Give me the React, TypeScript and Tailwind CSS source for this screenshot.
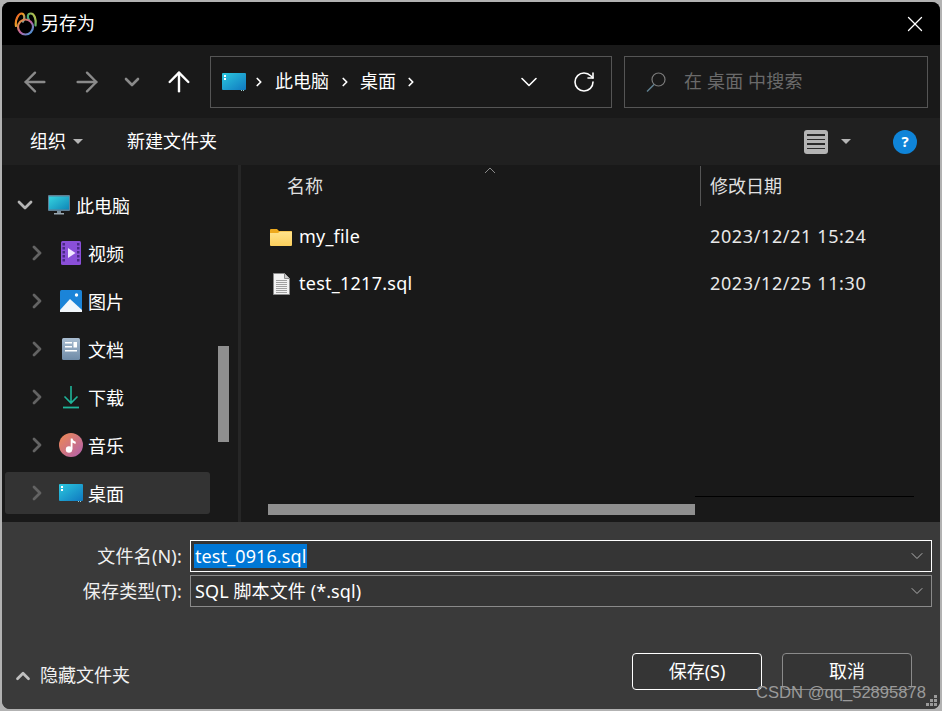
import React from 'react';
import { ArrowLeft, ArrowRight, ArrowUp, ChevronDown, ChevronRight, ChevronUp, RotateCw, X } from 'lucide-react';

const FONT = { fontFamily: '"Noto Sans", "Noto Sans CJK SC", sans-serif' };

const Logo = () => (
    <svg width="24" height="24" viewBox="0 0 24 24" fill="none">
        <defs>
            <linearGradient id="logoA" x1="0" y1="0" x2="1" y2="1">
                <stop offset="0" stopColor="#e8402c" />
                <stop offset="0.45" stopColor="#f0a020" />
                <stop offset="1" stopColor="#2f9fe0" />
            </linearGradient>
            <linearGradient id="logoB" x1="1" y1="0" x2="0" y2="1">
                <stop offset="0" stopColor="#d8c040" />
                <stop offset="0.6" stopColor="#4fb070" />
                <stop offset="1" stopColor="#2f8fe0" />
            </linearGradient>
            <linearGradient id="logoC" x1="0" y1="0" x2="1" y2="1">
                <stop offset="0" stopColor="#f0a020" />
                <stop offset="0.5" stopColor="#c060a0" />
                <stop offset="1" stopColor="#2f9fe0" />
            </linearGradient>
        </defs>
        <path d="M2 14C.8 8 4.5 1.5 7.5 1.5c3.2 0 3.6 5 1.4 8.2" stroke="url(#logoA)" strokeWidth="2.2" strokeLinecap="round" />
        <path d="M15 8C13 5 13.5 1.5 16.8 1.5c3.5 0 5.7 6 4.7 12" stroke="url(#logoB)" strokeWidth="2.2" strokeLinecap="round" />
        <circle cx="11.5" cy="15" r="7.5" stroke="url(#logoC)" strokeWidth="2.2" />
    </svg>
);

const DesktopIcon = ({ id }: { id: string }) => (
    <svg width="24" height="18" viewBox="0 0 24 18">
        <defs>
            <linearGradient id={id} x1="0" y1="0" x2="1" y2="1">
                <stop offset="0" stopColor="#2cc8de" />
                <stop offset="1" stopColor="#0f78c0" />
            </linearGradient>
        </defs>
        <rect x="0" y="0" width="24" height="17" rx="1" fill={`url(#${id})`} />
        <rect x="2" y="2" width="2" height="2" fill="#fff" />
        <rect x="2" y="5" width="2" height="2" fill="#fff" />
        <rect x="19" y="17" width="1" height="1" fill="#9cc" />
        <rect x="21" y="17" width="1" height="1" fill="#9cc" />
    </svg>
);

const MonitorIcon = () => (
    <svg width="22" height="20" viewBox="0 0 22 20">
        <defs>
            <linearGradient id="mon" x1="0" y1="0" x2="1" y2="1">
                <stop offset="0" stopColor="#35d3df" />
                <stop offset="1" stopColor="#0f86b8" />
            </linearGradient>
        </defs>
        <rect x="0" y="0" width="22" height="16" rx="1" fill="#5f7f95" />
        <rect x="1" y="1.5" width="20" height="13" fill="url(#mon)" />
        <rect x="9" y="16" width="4" height="2" fill="#7d8f9b" />
        <rect x="6" y="18" width="10" height="1.5" fill="#9aa8b2" />
    </svg>
);

const VideoIcon = () => (
    <svg width="20" height="24" viewBox="0 0 20 24">
        <rect width="20" height="24" rx="1.5" fill="#8a4fd8" />
        {[2, 6, 10, 14, 18].map((y) => (
            <g key={y}>
                <rect x="1.5" y={y} width="2.5" height="2.5" fill="#4a2a86" />
                <rect x="16" y={y} width="2.5" height="2.5" fill="#4a2a86" />
            </g>
        ))}
        <path d="M7 7l7.5 5L7 17z" fill="#f0e6ff" />
    </svg>
);

const PictureIcon = () => (
    <svg width="22" height="22" viewBox="0 0 22 22">
        <rect width="22" height="22" rx="1.5" fill="#1b84d8" />
        <circle cx="16.5" cy="5" r="1.7" fill="#fff" />
        <path d="M0 20L10 9l12 11v2H0z" fill="#f2f7fb" />
    </svg>
);

const DocIcon = () => (
    <svg width="18" height="22" viewBox="0 0 18 22">
        <defs>
            <linearGradient id="doc" x1="0" y1="0" x2="0" y2="1">
                <stop offset="0" stopColor="#a9bdd1" />
                <stop offset="1" stopColor="#6f8ba8" />
            </linearGradient>
        </defs>
        <rect width="18" height="22" rx="1.5" fill="url(#doc)" />
        <rect x="3" y="4" width="7" height="1.5" fill="#fff" />
        <rect x="3" y="8" width="7" height="1.5" fill="#fff" />
        <rect x="11.5" y="4" width="3.5" height="5.5" fill="#fff" />
        <rect x="3" y="12" width="12" height="1.5" fill="#fff" />
    </svg>
);

const DownloadIcon = () => (
    <svg width="18" height="24" viewBox="0 0 18 24" fill="none" stroke="#1fb59a" strokeWidth="1.6">
        <path d="M9 1v17M2.5 11.5L9 18l6.5-6.5" />
        <path d="M1 22.5h16" strokeWidth="1.8" />
    </svg>
);

const MusicIcon = () => (
    <svg width="24" height="24" viewBox="0 0 24 24">
        <defs>
            <linearGradient id="mus" x1="0" y1="0" x2="1" y2="1">
                <stop offset="0" stopColor="#f08a50" />
                <stop offset="1" stopColor="#b060b0" />
            </linearGradient>
        </defs>
        <circle cx="12" cy="12" r="12" fill="url(#mus)" />
        <circle cx="10" cy="16.5" r="3.2" fill="#fff" />
        <path d="M11.7 16.5V5.5h1.8c.3 2.2 1.7 2.8 3.2 3.2v2c-1.2-.1-2.4-.6-3.2-1.3v7.1z" fill="#fff" />
    </svg>
);

const FolderIcon = () => (
    <svg width="22" height="18" viewBox="0 0 22 18">
        <path d="M0 2a1 1 0 0 1 1-1h6l2 2h12a1 1 0 0 1 1 1v2H0z" fill="#eda91e" />
        <defs>
            <linearGradient id="fold" x1="0" y1="0" x2="0" y2="1">
                <stop offset="0" stopColor="#ffe38c" />
                <stop offset="1" stopColor="#fccf5c" />
            </linearGradient>
        </defs>
        <path d="M0 5h8l2-1.5h12V17a1 1 0 0 1-1 1H1a1 1 0 0 1-1-1z" fill="url(#fold)" />
    </svg>
);

const FileIcon = () => (
    <svg width="17" height="22" viewBox="0 0 17 22">
        <path d="M.5.5h11l5 5v16H.5z" fill="#f2f2f2" stroke="#8a8a8a" />
        <path d="M11.5.5v5h5" fill="#ccc" stroke="#8a8a8a" />
        {[7, 9, 11, 13, 15, 17, 19].map((y) => (
            <rect key={y} x="3" y={y} width="11" height="1" fill="#a0a0a0" />
        ))}
    </svg>
);

const SearchIcon = () => (
    <svg width="20" height="20" viewBox="0 0 20 20" fill="none" strokeWidth="1.2">
        <circle cx="12.5" cy="7.5" r="6.5" stroke="#7a7a7a" />
        <path d="M8 12.5L1 19.5" stroke="#5f7f8f" strokeWidth="1.5" />
    </svg>
);

const ListViewIcon = () => (
    <div className="flex flex-col justify-center gap-[3px] w-6 h-6 rounded-[3px] bg-[#b4b4b4] px-[3px]">
        {[0, 1, 2, 3].map((i) => (
            <div key={i} className="h-[1.5px] bg-[#2a2a2a]" />
        ))}
    </div>
);

const Caret = () => (
    <svg width="10" height="5" viewBox="0 0 10 5">
        <path d="M0 0h10L5 5z" fill="#b5b5b5" />
    </svg>
);

const TreeRow: React.FC<{ icon: React.ReactNode; label: string; selected?: boolean }> = ({ icon, label, selected }) => (
    <div className="flex items-center h-[48px] pl-[3px]">
        <div className={`flex items-center w-[205px] h-[42px] rounded-[3px] ${selected ? 'bg-[#333333]' : ''}`}>
            <ChevronRight size={24} strokeWidth={2.8} className="ml-[20px] text-[#636363]" />
            <div className="w-[24px] ml-[10px] flex justify-center shrink-0">{icon}</div>
            <span className="ml-[5px] mt-[2px] text-white text-[18px]">{label}</span>
        </div>
    </div>
);

const Field: React.FC<{ label: string; focused?: boolean; children: React.ReactNode }> = ({ label, focused, children }) => (
    <div className="flex items-center h-[32px]">
        <div className="w-[180px] text-right text-[18px] text-[#f0f0f0] whitespace-nowrap tracking-[0.2px]">{label}</div>
        <div className={`flex items-center ml-[8px] w-[742px] h-[32px] border pl-[3px] pr-[4px] bg-[#353535] ${focused ? 'border-white' : 'border-[#8a8a8a]'}`}>
            <div className="flex-1 text-[18px] text-white whitespace-nowrap tracking-[0.1px]">{children}</div>
            <ChevronDown size={20} strokeWidth={1.2} className="text-[#b0b0b0]" />
        </div>
    </div>
);

export default function App() {
    return (
        <div className="w-[942px] h-[711px] bg-[#b2b2b2] p-[2px] overflow-hidden" style={FONT}>
            <div className="relative flex flex-col h-full rounded-[8px] overflow-hidden bg-[#3a3a3a]">
                {/* title bar */}
                <div className="flex items-center h-[43px] bg-black pl-[12px] pr-[12px] shrink-0">
                    <Logo />
                    <span className="ml-[3px] text-[18px] text-white">另存为</span>
                    <X size={26} strokeWidth={1.2} className="ml-auto text-white" />
                </div>

                {/* nav bar */}
                <div className="flex items-center h-[73px] bg-[#191919] shrink-0 pl-[17px]">
                    <ArrowLeft size={32} strokeWidth={1.8} className="text-[#8a8a8a]" />
                    <ArrowRight size={32} strokeWidth={1.8} className="ml-[20px] text-[#8a8a8a]" />
                    <ChevronDown size={24} strokeWidth={2.6} className="ml-[17px] text-[#8a8a8a]" />
                    <ArrowUp size={32} strokeWidth={1.8} className="ml-[19px] text-white" />
                    <div className="flex items-center w-[402px] h-[52px] ml-[15px] border border-[#555555] pl-[11px]">
                        <DesktopIcon id="addr" />
                        <ChevronRight size={14} strokeWidth={3} className="ml-[6px] text-white" />
                        <span className="ml-[9px] text-[18px] text-white">此电脑</span>
                        <ChevronRight size={14} strokeWidth={3} className="ml-[9px] text-white" />
                        <span className="ml-[8px] text-[18px] text-white">桌面</span>
                        <ChevronRight size={14} strokeWidth={3} className="ml-[8px] text-white" />
                        <ChevronDown size={28} strokeWidth={1.4} className="ml-auto text-white" />
                        <RotateCw size={24} strokeWidth={1.6} className="ml-[29px] mr-[15px] text-white" />
                    </div>
                    <div className="flex items-center w-[304px] h-[52px] ml-[12px] border border-[#555555] pl-[21px]">
                        <SearchIcon />
                        <span className="ml-[18px] text-[18px] text-[#6a6a6a] tracking-[0.15px]">在 桌面 中搜索</span>
                    </div>
                </div>

                {/* toolbar */}
                <div className="flex items-center h-[47px] bg-[#202020] shrink-0 pl-[28px] pr-[23px]">
                    <span className="text-[18px] text-white">组织</span>
                    <div className="ml-[7px]"><Caret /></div>
                    <span className="ml-[44px] text-[18px] text-white">新建文件夹</span>
                    <div className="ml-auto flex items-center">
                        <ListViewIcon />
                        <div className="ml-[13px]"><Caret /></div>
                        <div className="ml-[42px] flex items-center justify-center w-6 h-6 rounded-full bg-[#0f84d8] text-white text-[15px] font-bold">?</div>
                    </div>
                </div>

                {/* main */}
                <div className="relative flex h-[357px] bg-[#191919] shrink-0 overflow-hidden">
                    <div className="relative w-[236px] shrink-0 pt-[16px]">
                        <div className="flex items-center h-[48px] pl-[11px]">
                            <ChevronDown size={24} strokeWidth={2.8} className="text-[#b5b5b5]" />
                            <div className="ml-[11px]"><MonitorIcon /></div>
                            <span className="ml-[6px] mt-[2px] text-[18px] text-white">此电脑</span>
                        </div>
                        <TreeRow icon={<VideoIcon />} label="视频" />
                        <TreeRow icon={<PictureIcon />} label="图片" />
                        <TreeRow icon={<DocIcon />} label="文档" />
                        <TreeRow icon={<DownloadIcon />} label="下载" />
                        <TreeRow icon={<MusicIcon />} label="音乐" />
                        <TreeRow icon={<DesktopIcon id="side" />} label="桌面" selected />
                        <div className="absolute left-[216px] top-[181px] w-[11px] h-[96px] bg-[#8f8f8f]" />
                    </div>
                    <div className="w-[3px] bg-[#262626] shrink-0" />

                    <div className="relative flex-1 min-w-0">
                        <div className="flex items-center h-[42px] pl-[46px]">
                            <span className="text-[18px] text-[#e0e0e0] w-[413px]">名称</span>
                            <div className="w-px h-[40px] bg-[#555555]" />
                            <span className="ml-[9px] text-[18px] text-[#e0e0e0]">修改日期</span>
                        </div>
                        <svg className="absolute left-[243px] top-[2px]" width="12" height="7" viewBox="0 0 12 7" fill="none" stroke="#8a8a8a">
                            <path d="M1 6l5-5 5 5" />
                        </svg>
                        <div className="flex items-center h-[47px] mt-[6px] pl-[29px]">
                            <div className="w-[22px]"><FolderIcon /></div>
                            <span className="ml-[7px] w-[411px] text-[18px] text-white tracking-[0.2px]">my_file</span>
                            <span className="text-[18px] text-[#e8e8e8] whitespace-nowrap tracking-[0.62px]">2023/12/21 15:24</span>
                        </div>
                        <div className="flex items-center h-[47px] pl-[29px]">
                            <div className="w-[22px] flex justify-center"><FileIcon /></div>
                            <span className="ml-[7px] w-[411px] text-[18px] text-white tracking-[0.25px]">test_1217.sql</span>
                            <span className="text-[18px] text-[#e8e8e8] whitespace-nowrap tracking-[0.62px]">2023/12/25 11:30</span>
                        </div>
                        <div className="absolute left-[454px] top-[331px] w-[219px] h-px bg-black" />
                        <div className="absolute left-[27px] top-[339px] w-[427px] h-[11px] bg-[#8f8f8f]" />
                    </div>
                </div>

                {/* bottom */}
                <div className="relative flex flex-col flex-1 bg-[#3a3a3a] pt-[18px]">
                    <Field label="文件名(N):" focused>
                        <span className="bg-[#0078d7] px-[1px]">test_0916.sql</span>
                    </Field>
                    <div className="h-[3px]" />
                    <Field label="保存类型(T):"><span className="pl-[1px]">SQL 脚本文件 (*.sql)</span></Field>
                    <div className="flex items-center mt-[46px] pl-[10px] pr-[28px]">
                        <ChevronUp size={22} strokeWidth={3} className="text-[#c0c0c0] mt-[8px]" />
                        <span className="ml-[6px] mt-[8px] text-[18px] text-[#f0f0f0]">隐藏文件夹</span>
                        <button className="ml-auto w-[130px] h-[37px] rounded-[4px] border border-white bg-[#353535] text-[18px] text-white">保存(S)</button>
                        <button className="ml-[20px] w-[130px] h-[37px] rounded-[4px] border border-[#8a8a8a] bg-[#353535] text-[18px] text-white">取消</button>
                    </div>
                    <div className="absolute right-[3px] bottom-[3px] grid grid-cols-3 gap-px w-[11px] h-[11px]">
                        {[0, 0, 1, 0, 1, 1, 1, 1, 1].map((v, i) => (
                            <div key={i} className={v ? 'bg-[#9a9a9a]' : ''} />
                        ))}
                    </div>
                </div>

                <div className="absolute left-[754px] top-[680px] text-[16.6px] leading-[22px] text-[#9a9a9a] whitespace-nowrap" style={{ fontFamily: '"Liberation Sans", sans-serif' }}>
                    CSDN @qq_52895878
                </div>
            </div>
        </div>
    );
}
